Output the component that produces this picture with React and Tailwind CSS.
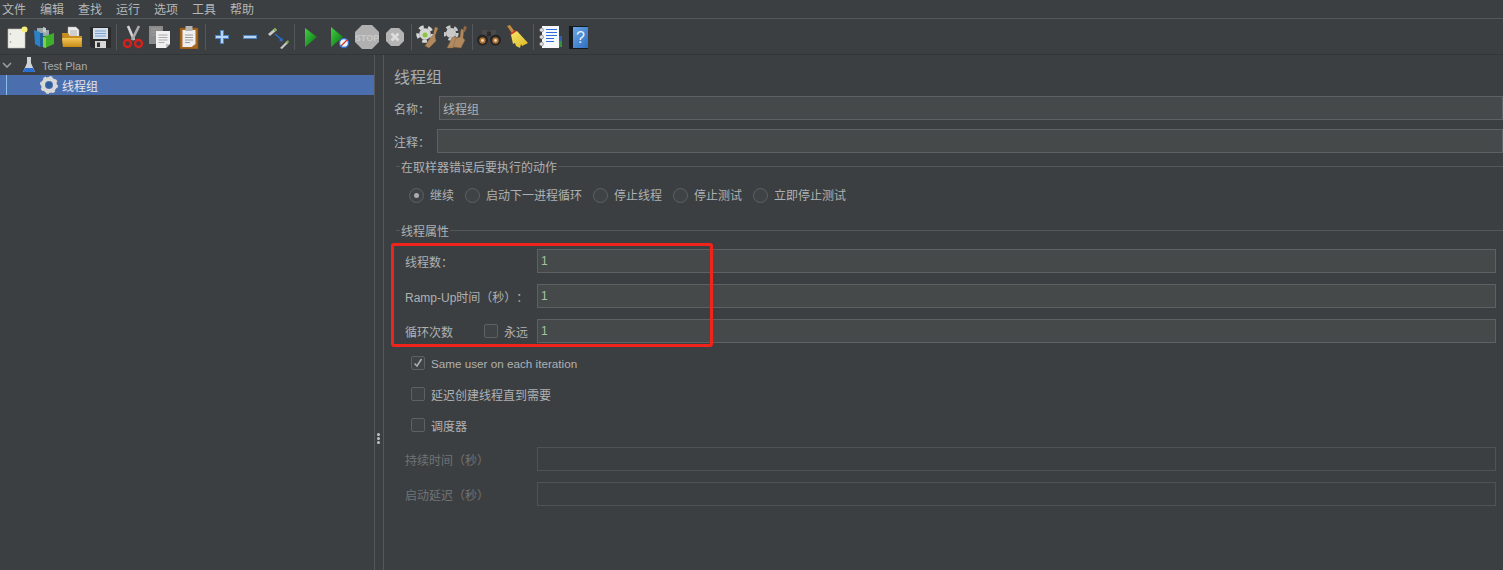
const latin = "font-['Liberation_Sans',sans-serif]";

const Sep = () => <span className="w-px h-[26px] bg-[#55585a] mx-[2px] shrink-0" />;

const Btn = ({ w = 28, children }) => (
  <span className="h-[30px] flex items-center justify-center shrink-0" style={{ width: w }}>
    {children}
  </span>
);

const I = ({ children, s = 24 }) => (
  <svg width={s} height={s} viewBox="0 0 24 24">
    {children}
  </svg>
);

// flex centred text sits a pixel high, the padding pushes it back down
const T = ({ children, className = "" }) => <span className={`pt-[2px] whitespace-nowrap ${className}`}>{children}</span>;

const Gear = ({ cx, cy, r, fill = "#d6d6d6" }) => (
  <g>
    <circle cx={cx} cy={cy} r={r * 0.72} fill={fill} />
    <circle cx={cx} cy={cy} r={r * 0.9} fill="none" stroke={fill} strokeWidth={r * 0.4} strokeDasharray={`${r * 0.6} ${r * 0.55}`} />
  </g>
);

const Broom = ({ d }) => <path d={d} fill="#b08a5e" stroke="#7d5c38" strokeWidth="0.4" />;

const Defs = () => (
  <svg width="0" height="0" className="absolute">
    <defs>
      <linearGradient id="play" x1="0" y1="0" x2="1" y2="1">
        <stop offset="0" stopColor="#45d045" />
        <stop offset="1" stopColor="#066e10" />
      </linearGradient>
      <linearGradient id="folder" x1="0" y1="0" x2="0" y2="1">
        <stop offset="0" stopColor="#f4c95a" />
        <stop offset="1" stopColor="#c98a16" />
      </linearGradient>
      <linearGradient id="broom" x1="0" y1="0" x2="1" y2="1">
        <stop offset="0" stopColor="#f7e66a" />
        <stop offset="1" stopColor="#dcb621" />
      </linearGradient>
      <linearGradient id="book" x1="0" y1="0" x2="1" y2="1">
        <stop offset="0" stopColor="#6ba6e6" />
        <stop offset="1" stopColor="#2f6fc0" />
      </linearGradient>
    </defs>
  </svg>
);

const Toolbar = () => (
  <div className="h-[36px] flex items-center pl-[2px] border-b border-[#333638]">
    <Btn>
      <I>
        <path d="M4 4h17v19H4z" fill="#efefe9" stroke="#bdbdb6" strokeWidth="0.6" />
        <circle cx="6.5" cy="9" r="0.8" fill="#9a9a94" />
        <circle cx="6.5" cy="17" r="0.8" fill="#9a9a94" />
        <circle cx="20.5" cy="4.5" r="3" fill="#f7ee7a" />
      </I>
    </Btn>
    <Btn>
      <I>
        <path d="M5 3h6l1 2h5v6H5z" fill="#9aa5a9" />
        <path d="M11 2l3 1v5l-3-1z" fill="#c4ccce" />
        <path d="M2 5l6 2v15l-5-3z" fill="#2b82c8" />
        <path d="M8 8h3v14H8z" fill="#1f5f96" />
        <path d="M11 12l11-4v11l-9 4-2-1z" fill="#3fae2a" />
        <path d="M11 12l3 1v10l-3-1z" fill="#7ed047" />
      </I>
    </Btn>
    <Btn>
      <I>
        <path d="M8 2h8l3 3v9H8z" fill="#ececec" stroke="#a9a9a9" strokeWidth="0.5" />
        <path d="M10 6h7M10 8h7M10 10h7" stroke="#9c9c9c" strokeWidth="0.7" />
        <path d="M2 8h6l2 3h12v11H3z" fill="#c88e1e" />
        <path d="M2 13h20l-1 9H3z" fill="url(#folder)" />
      </I>
    </Btn>
    <Btn>
      <I>
        <path d="M2 2h21v21H4l-2-2z" fill="#2b2b2b" />
        <path d="M5 3h15v11H5z" fill="#d3dfec" />
        <path d="M7 6h11M7 8.500h11M7 11h11" stroke="#6f97c4" strokeWidth="0.9" />
        <path d="M7 16h11v7H7z" fill="#d6d6d6" />
        <path d="M9 17.500h3v4.500H9z" fill="#2f2f2f" />
      </I>
    </Btn>
    <Sep />
    <Btn>
      <I>
        <path d="M7 1l6 14" stroke="#d4d4d4" strokeWidth="2.6" fill="none" />
        <path d="M18 1l-7 14" stroke="#a9a9a9" strokeWidth="2.6" fill="none" />
        <circle cx="6.500" cy="18.500" r="3.500" stroke="#d8201c" strokeWidth="2.4" fill="none" />
        <circle cx="17.500" cy="18.500" r="3.500" stroke="#d8201c" strokeWidth="2.4" fill="none" />
      </I>
    </Btn>
    <Btn>
      <I>
        <path d="M0 1h14v18H0z" fill="#8b8b8b" />
        <path d="M2 4h10M2 7h10M2 10h10" stroke="#a5a5a5" strokeWidth="0.8" />
        <path d="M7 6h14v13l-4 4H7z" fill="#f0f0f0" />
        <path d="M21 19l-4 4v-4z" fill="#bdbdbd" />
        <path d="M9.500 10h9M9.500 12.500h9M9.500 15h9M9.500 17.500h6" stroke="#9a9a9a" strokeWidth="0.8" />
      </I>
    </Btn>
    <Btn>
      <I>
        <path d="M3 3h18v21H3z" fill="#a6661b" stroke="#7c4a10" strokeWidth="0.6" />
        <path d="M5.500 5h13v14l-4 3h-9z" fill="#efefef" />
        <path d="M8.500 1h7v5h-7z" fill="#b5b5b5" />
        <path d="M8 10h8M8 12.500h8M8 15h8M8 17.500h5" stroke="#8a8a8a" strokeWidth="0.8" />
      </I>
    </Btn>
    <Sep />
    <Btn>
      <I>
        <path d="M12 5v14M5 12h14" stroke="#4f84c0" strokeWidth="4" />
        <path d="M12 6v12M6 12h12" stroke="#b6d6f3" strokeWidth="2" />
      </I>
    </Btn>
    <Btn>
      <I>
        <path d="M5 12h14" stroke="#4f84c0" strokeWidth="4" />
        <path d="M6 12h12" stroke="#b6d6f3" strokeWidth="2" />
      </I>
    </Btn>
    <Btn>
      <I>
        <path d="M2 9l7-6 2 2-7 6z" fill="#c9c9c9" />
        <path d="M7 4.500l2-1.500 2 2-2 1.500z" fill="#79b04a" />
        <path d="M9 9l6 5" stroke="#2a6fd6" strokeWidth="1.4" />
        <path d="M13 15l4-2-1 4z" fill="#2a6fd6" />
        <path d="M14 23l7-7 1 2-6 6z" fill="#c9c9c9" />
        <path d="M20 17l2-2 1 2-2 2z" fill="#79b04a" />
      </I>
    </Btn>
    <Sep />
    <Btn>
      <I>
        <path d="M6 3l12 9-12 10z" fill="url(#play)" />
      </I>
    </Btn>
    <Btn>
      <I>
        <path d="M4 2l12 10L4 22z" fill="url(#play)" />
        <circle cx="17" cy="18" r="4.500" fill="#f2f2f2" stroke="#2f6fd0" strokeWidth="1.300" />
        <path d="M14 21l6-6" stroke="#d8352a" strokeWidth="1.200" />
      </I>
    </Btn>
    <Btn>
      <I>
        <path d="M7 0h10l7 7v10l-7 7H7l-7-7V7z" fill="#b0b0b0" />
        <text x="12" y="15.500" textAnchor="middle" fontSize="9" fontWeight="700" fill="#cacaca" fontFamily="Liberation Sans">STOP</text>
      </I>
    </Btn>
    <Btn>
      <I>
        <path d="M8 3h8l5 5v8l-5 5H8l-5-5V8z" fill="#b4b4b4" />
        <path d="M8.500 8.500l7 7M15.500 8.500l-7 7" stroke="#dcdcdc" strokeWidth="2.800" />
      </I>
    </Btn>
    <Sep />
    <Btn>
      <I>
        <Gear cx={9} cy={9} r={8} />
        <circle cx="9" cy="10" r="2.500" fill="#8cc63f" />
        <Broom d="M19 2l3 1-3 8 1 5-7 7-4-2 5-8 3-3z" />
      </I>
    </Btn>
    <Btn>
      <I>
        <Gear cx={7} cy={8} r={7} fill="#c9c9c9" />
        <Broom d="M3 23l5-10 3-2 2 3-1 4-3 5z" />
        <Broom d="M9 22l3-9 4-1 1-8 3 1-1 8 2 2-4 8z" />
        <path d="M20 1l3 1-2 5-2-1z" fill="#8d6a44" />
      </I>
    </Btn>
    <Sep />
    <Btn>
      <I>
        <path d="M5 5h5v8H5zM14 5h5v8h-5z" fill="#4a4a4a" />
        <path d="M10 7h4v4h-4z" fill="#2a2a2a" />
        <circle cx="5.500" cy="15" r="5.500" fill="#242424" />
        <circle cx="18.500" cy="15" r="5.500" fill="#242424" />
        <circle cx="5.500" cy="15.500" r="3.200" fill="#b0712f" />
        <circle cx="18.500" cy="15.500" r="3.200" fill="#b0712f" />
        <circle cx="5.500" cy="15.500" r="1.400" fill="#e7d6c3" />
        <circle cx="18.500" cy="15.500" r="1.400" fill="#e7d6c3" />
      </I>
    </Btn>
    <Btn>
      <I>
        <path d="M2 1l3-1 5 7-2.500 2z" fill="#c08b3e" />
        <path d="M5 9l5-4 2 2-5 4z" fill="#d7352b" />
        <path d="M6 10l6-4 11 12-6 3-1-2-1 4-4-2-1-3-2 1z" fill="url(#broom)" />
      </I>
    </Btn>
    <Sep />
    <Btn>
      <I>
        <path d="M4 1h17v22H4z" fill="#f6f8fc" />
        <path d="M8 4.500h11M8 7.500h11M8 10.500h11M8 13.500h8M8 16.500h8" stroke="#2c6dd6" strokeWidth="1.200" />
        <circle cx="3.500" cy="5" r="2" fill="#e2e2e2" stroke="#555" strokeWidth="0.5" />
        <circle cx="3.500" cy="12" r="2" fill="#e2e2e2" stroke="#555" strokeWidth="0.5" />
        <circle cx="3.500" cy="19" r="2" fill="#e2e2e2" stroke="#555" strokeWidth="0.5" />
        <path d="M21 11h3v5h-3z" fill="#2d5fb8" />
        <path d="M21 16h3v6h-3z" fill="#2e9440" />
      </I>
    </Btn>
    <Btn>
      <I>
        <path d="M3 1h19v23H3z" fill="#15181c" />
        <path d="M7 2h15v21H7z" fill="url(#book)" />
        <text x="14.500" y="18" textAnchor="middle" fontSize="16" fill="#e8f0fa" fontFamily="Liberation Sans">?</text>
      </I>
    </Btn>
  </div>
);

const Legend = ({ title }) => (
  <div className="flex items-center h-[18px] pl-[12px]">
    <span className="w-[4px] h-px bg-[#55585a]" />
    <T className="px-px">{title}</T>
    <span className="flex-1 h-px bg-[#55585a]" />
  </div>
);

const Radio = ({ on, label, w }) => (
  <span className="flex items-center shrink-0" style={{ width: w }}>
    <span className="w-[15px] h-[15px] rounded-full border border-[#5e6163] bg-[#3f4345] flex items-center justify-center mr-[6px]">
      {on && <span className="w-[5px] h-[5px] rounded-full bg-[#a9adaf]" />}
    </span>
    {label}
  </span>
);

const Check = ({ on }) => (
  <span className="w-[14px] h-[14px] rounded-[2px] border border-[#5e6163] bg-[#3f4345] flex items-center justify-center shrink-0">
    {on && (
      <svg width="10" height="10" viewBox="0 0 10 10">
        <path d="M1.5 5.5l2.5 2.5 4.5-7" stroke="#a9adaf" strokeWidth="1.6" fill="none" />
      </svg>
    )}
  </span>
);

const Field = ({ value, dim }) => (
  <div
    className={`h-[24px] w-[959px] border flex items-center pl-[3px] ${latin} ${
      dim ? "border-[#505355]" : "border-[#5e6163] bg-[#45494a] text-[#a5c2a0]"
    }`}
  >
    {value}
  </div>
);

const ThreadRow = ({ label, value, dim }) => (
  <div className={`flex items-center h-[24px] pl-[21px] ${dim ? "text-[#707375]" : ""}`}>
    <span className="w-[132px] flex items-center whitespace-nowrap shrink-0">{label}</span>
    <Field value={value} dim={dim} />
  </div>
);

export default function App() {
  return (
    <div className="w-[1503px] h-[570px] overflow-hidden bg-[#3c3f41] text-[#aeb1b3] text-[12px] leading-none font-['Noto_Sans_CJK_SC','Liberation_Sans',sans-serif] [text-spacing-trim:space-all]">
      <Defs />
      <div className="h-[19px] flex items-center pl-[2px] gap-[14px] border-b border-[#55585a] text-[#b4b7b9]">
        <span>文件</span>
        <span>编辑</span>
        <span>查找</span>
        <span>运行</span>
        <span>选项</span>
        <span>工具</span>
        <span>帮助</span>
      </div>
      <Toolbar />
      <div className="flex h-[515px]">
        <div className="w-[375px] border-r border-[#55585a] shrink-0">
          <div className="h-[20px] flex items-center">
            <svg width="10" height="6" viewBox="0 0 10 6" className="ml-[2px]">
              <path d="M1 1l4 4 4-4" stroke="#9b9ea0" strokeWidth="1.6" fill="none" />
            </svg>
            <svg width="16" height="18" viewBox="0 0 16 18" className="ml-[9px]">
              <path d="M6 1h4v6l4 9H2l4-9z" fill="#cfd3d8" />
              <path d="M4 12h8l2 4H2z" fill="#2a6fd0" />
            </svg>
            <T className={`ml-[5px] text-[11px] text-[#a7aaac] ${latin}`}>Test Plan</T>
          </div>
          <div className="h-[20px] flex items-center bg-[#4b6eaf] pl-[6px]">
            <span className="w-px h-full bg-[#8fc0ea]" />
            <svg width="18" height="18" viewBox="0 0 18 18" className="ml-[33px]">
              <circle cx="9" cy="9" r="6" fill="none" stroke="#d8d8d8" strokeWidth="4" />
              <circle cx="9" cy="9" r="8" fill="none" stroke="#d8d8d8" strokeWidth="2" strokeDasharray="3 3.3" />
              <circle cx="9" cy="9" r="3" fill="#2f5f9a" />
            </svg>
            <T className="ml-[4px] text-[#e3e6e8]">线程组</T>
          </div>
        </div>
        <div className="w-[9px] relative shrink-0 border-r border-[#55585a]">
          <div className="absolute left-[2px] top-[378px] flex flex-col gap-px">
            <span className="w-[3px] h-[3px] rounded-full bg-[#c0c3c5]" />
            <span className="w-[3px] h-[3px] rounded-full bg-[#c0c3c5]" />
            <span className="w-[3px] h-[3px] rounded-full bg-[#c0c3c5]" />
          </div>
        </div>
        <div className="flex-1 min-w-0 overflow-hidden">
          <div className="pl-[10px] h-[41px] flex items-center text-[16px] text-[#a8abad]">
            <span>线程组</span>
          </div>
          <div className="flex items-center h-[24px] pl-[10px]">
            <T className="w-[45px]">名称：</T>
            <div className="flex-1 h-[24px] border border-[#5e6163] bg-[#45494a] flex items-center pl-[3px]">
              <T>线程组</T>
            </div>
          </div>
          <div className="flex items-center h-[24px] pl-[10px] mt-[9px]">
            <T className="w-[43px]">注释：</T>
            <div className="flex-1 h-[24px] border border-[#5e6163] bg-[#45494a]" />
          </div>
          <div className="mt-[4px]">
            <Legend title="在取样器错误后要执行的动作" />
          </div>
          <div className="flex items-center h-[20px] pl-[25px] mt-[10px]">
            <Radio on label="继续" w={56} />
            <Radio label="启动下一进程循环" w={128} />
            <Radio label="停止线程" w={80} />
            <Radio label="停止测试" w={80} />
            <Radio label="立即停止测试" w={110} />
          </div>
          <div className="mt-[16px]">
            <Legend title="线程属性" />
          </div>
          <div className="relative mt-[10px] flex flex-col gap-[11px]">
            <ThreadRow label={<T>线程数：</T>} value="1" />
            <ThreadRow
              label={
                <T>
                  <span className={latin}>Ramp-Up</span>时间（秒）：
                </T>
              }
              value="1"
            />
            <ThreadRow
              label={
                <>
                  <T className="w-[79px]">循环次数</T>
                  <Check />
                  <T className="ml-[6px]">永远</T>
                </>
              }
              value="1"
            />
            <div className="absolute left-[7px] -top-[6px] w-[322px] h-[104px] border-[3px] border-[#f0241a] rounded-[3px]" />
          </div>
          <div className="flex items-center h-[20px] pl-[27px] mt-[10px] gap-[6px]">
            <Check on />
            <T className={`text-[11.7px] ${latin}`}>Same user on each iteration</T>
          </div>
          <div className="flex items-center h-[20px] pl-[27px] mt-[11px] gap-[6px]">
            <Check />
            <T>延迟创建线程直到需要</T>
          </div>
          <div className="flex items-center h-[20px] pl-[27px] mt-[11px] gap-[6px]">
            <Check />
            <T>调度器</T>
          </div>
          <div className="flex flex-col gap-[11px] mt-[12px]">
            <ThreadRow label={<T>持续时间（秒）</T>} dim />
            <ThreadRow label={<T>启动延迟（秒）</T>} dim />
          </div>
        </div>
      </div>
    </div>
  );
}
